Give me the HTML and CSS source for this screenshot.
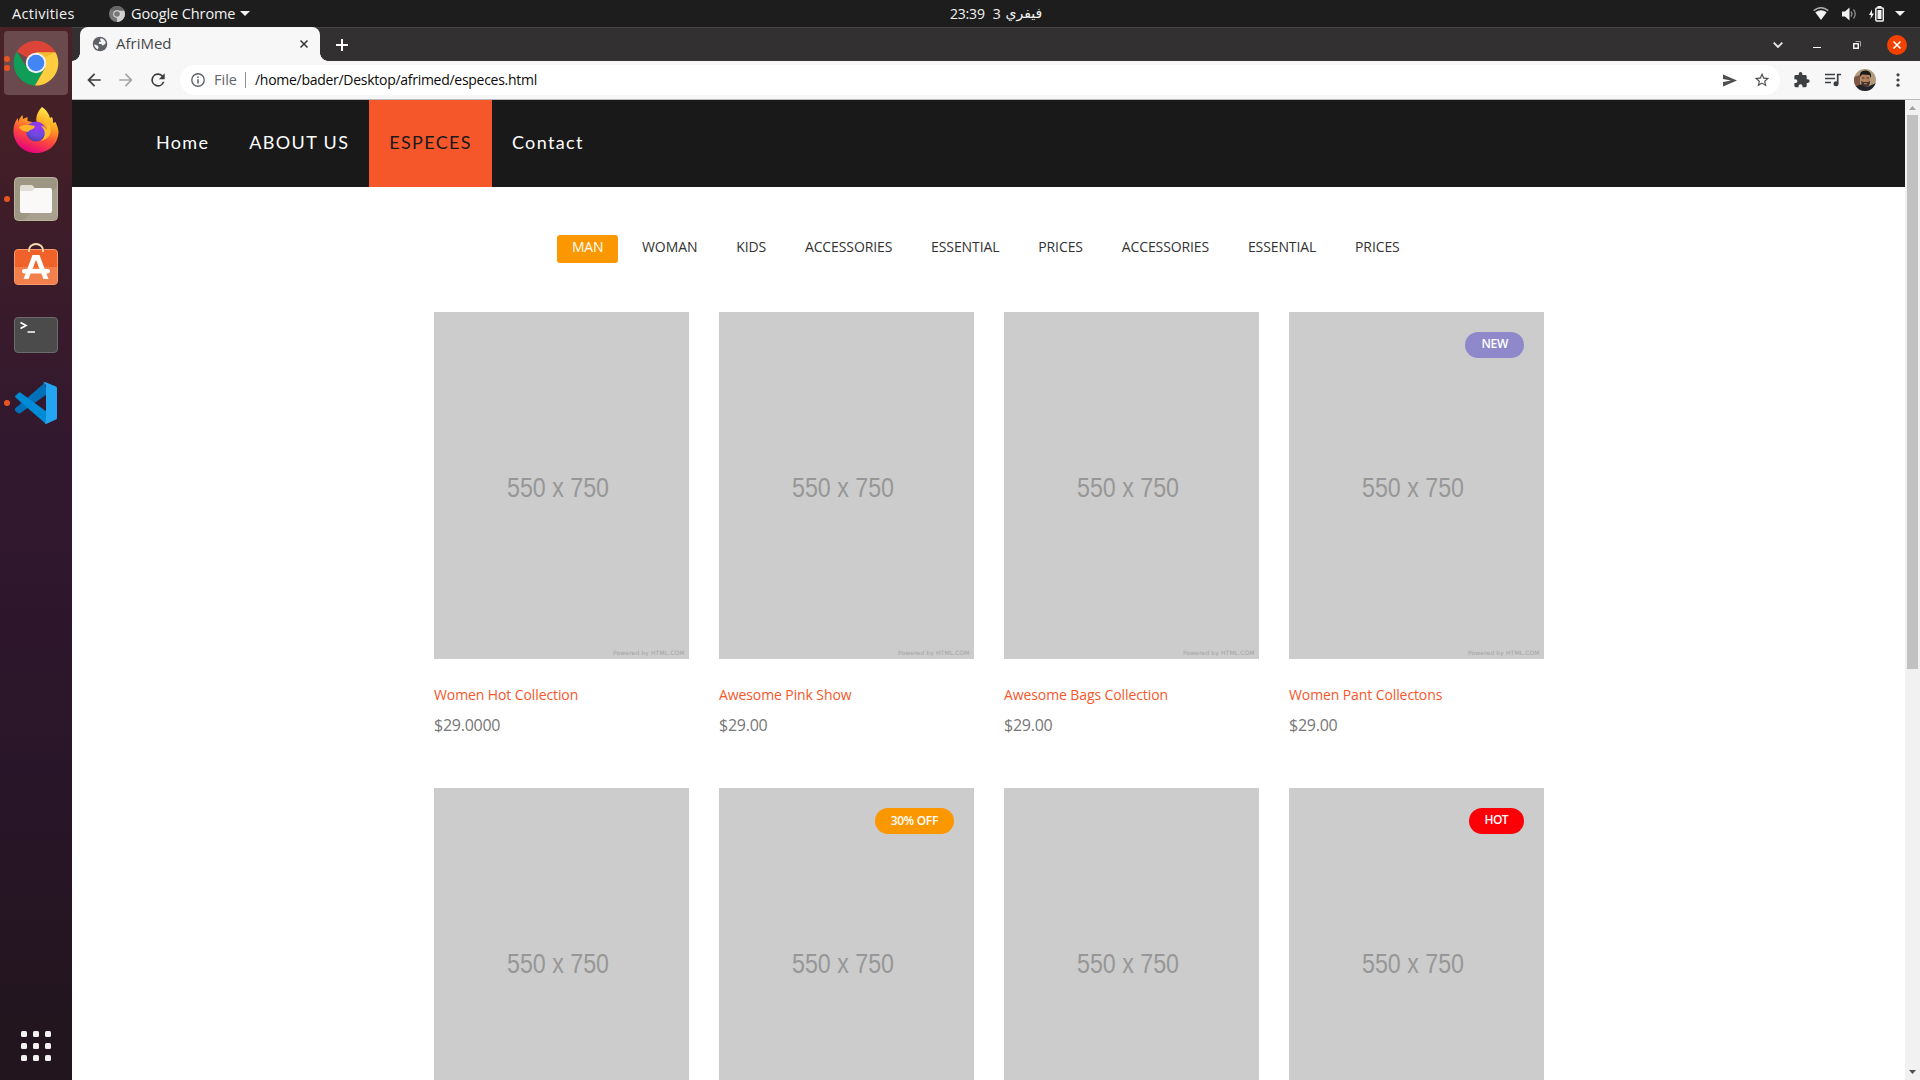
FILE: index.html
```html
<!DOCTYPE html>
<html lang="en">
<head>
<meta charset="utf-8">
<title>AfriMed</title>
<link rel="stylesheet" href="styles.css">
</head>
<body>
<svg class="defs" width="0" height="0" aria-hidden="true">
  <symbol id="placeholder" viewBox="0 0 255 347">
    <rect width="255" height="347" fill="#ccc"/>
    <text x="73" y="184.5" font-family="Liberation Sans, sans-serif" font-size="27.5" fill="#979797" textLength="102" lengthAdjust="spacingAndGlyphs">550 x 750</text>
    <text x="179" y="343" font-family="DejaVu Sans, sans-serif" font-size="6" fill="#a3a3a3" textLength="71.5">Powered by HTML.COM</text>
  </symbol>
</svg>

<header class="topbar">
  <span class="activities">Activities</span>
  <div class="app-menu">
    <svg width="16" height="16" viewBox="0 0 16 16"><circle cx="8" cy="8" r="8" fill="#777"/><path d="M8 8V16A8 8 0 0 0 15.2 4.6H8Z" fill="#d0d0d0"/><path d="M1.1 4A8 8 0 0 1 15.2 4.6H8Z" fill="#666"/><circle cx="8" cy="8" r="3.8" fill="#ddd"/><circle cx="8" cy="8" r="2.8" fill="#777"/></svg>
    <span class="app-name">Google Chrome</span>
    <svg width="10" height="5" viewBox="0 0 10 5"><path d="M0 0H10L5 5Z" fill="#f2f2f2"/></svg>
  </div>
  <div class="clock"><span>23:39</span><span class="day">3</span><span class="month" lang="ar">فيفري</span></div>
  <div class="tray">
    <svg width="16" height="14" viewBox="0 0 16 14"><path d="M.7 3.6Q8-2.2 15.300 3.600" fill="none" stroke="#aaa" stroke-width="1.500"/><path d="M2.300 5.300Q8 1.400 13.700 5.300L8 13Z" fill="#f2f2f2"/></svg>
    <svg class="volume" width="16" height="14" viewBox="0 0 16 14"><path d="M0 4.500H3L7.500.500V13.500L3 9.500H0Z" fill="#f2f2f2"/><path d="M9 4.500Q11 7 9 9.500M11.500 2.500Q15 7 11.500 11.500" fill="none" stroke="#8a8a8a" stroke-width="1.300"/></svg>
    <svg class="battery" width="15" height="16" viewBox="0 0 15 16"><path d="M3 3.500L0 9H2L1.500 13L5 7.500H3Z" fill="#f2f2f2"/><rect x="6.800" y="2" width="7.500" height="13" rx="1" fill="none" stroke="#f2f2f2" stroke-width="1.500"/><path d="M8.500 0H12.500V2H8.500ZM8.500 4H12.500V13H8.500Z" fill="#f2f2f2"/></svg>
    <svg width="10" height="5" viewBox="0 0 10 5"><path d="M0 0H10L5 5Z" fill="#f2f2f2"/></svg>
  </div>
</header>

<div class="desktop">
  <aside class="dock">
    <div class="slot active running twice">
      <svg width="46" height="46" viewBox="0 0 46 46"><path d="M23 23L3.800 11.500A22.500 22.500 0 0 1 42.700 12.500Z" fill="#db4437"/><path d="M3.800 11.500A22.500 22.500 0 0 0 22 45.500L32 28L23 23L13 26Z" fill="#0f9d58"/><path d="M22 45.500A22.500 22.500 0 0 0 42.700 12.500H23L32 28Z" fill="#ffcd40"/><path d="M23 12.500H42.700L32 17Z" fill="#f1b92e"/><circle cx="23" cy="23" r="10.200" fill="#f1f1f1"/><circle cx="23" cy="23" r="8.300" fill="#4285f4"/></svg>
    </div>
    <div class="slot firefox">
      <svg width="46" height="48" viewBox="0 0 46 48"><defs><linearGradient id="fox" x1=".75" y1="0" x2=".35" y2="1"><stop offset="0" stop-color="#fff44f"/><stop offset=".35" stop-color="#ffa51f"/><stop offset=".65" stop-color="#ff4a3e"/><stop offset="1" stop-color="#e4007f"/></linearGradient><radialGradient id="globe" cx=".6" cy=".25" r=".8"><stop offset="0" stop-color="#a033f0"/><stop offset=".6" stop-color="#6a4ae0"/><stop offset="1" stop-color="#5038a8"/></radialGradient></defs><path d="M29 1C35 5 36 9 37 12L39 11C40 13 40 15 40 17L42.500 16C44.500 20 45.500 24 45.500 26C45 39 35 47 23 47C10 47 .500 37 .500 25C.500 20 2.500 14 5 12V16C7 12 8 10 9.500 9L10 13L14.500 11V15C17 16 21 16 24 17C22 11 25 5 29 1Z" fill="url(#fox)"/><circle cx="23" cy="25.500" r="10" fill="url(#globe)"/><path d="M6 21C11 18 17 19 22 20C21 24 17 23 15 26C11 25 8 25 6 21Z" fill="#ffb329"/><path d="M22 14C28 12 35 17 34 24C32 22 31 20 28 20C33 24 33 31 28 35C36 33 40 27 37 19C34 14 29 12 22 14Z" fill="#ffbd2e"/></svg>
    </div>
    <div class="slot running">
      <svg width="44" height="44" viewBox="0 0 44 44"><rect x=".500" y=".500" width="43" height="43" rx="4" fill="#9d9683" stroke="#b8b29f"/><path d="M10 43L43 10V43Z" fill="#a8a18e"/><path d="M6 14V10Q6 8 8 8H17Q19 8 20 10L21 12H36V16H6Z" fill="#e2ded3"/><path d="M6 14H18L21 11H36Q38 11 38 13V34Q38 36 36 36H8Q6 36 6 34Z" fill="#faf9f8"/></svg>
    </div>
    <div class="slot store">
      <svg width="44" height="42" viewBox="0 0 44 42"><rect x=".500" y="6.500" width="43" height="35" rx="3.500" fill="#f0622a" stroke="#f79a6c"/><path d="M1 24H43V38Q43 41 40 41H4Q1 41 1 38Z" fill="#f37f4c"/><path d="M15 9V7A7 6 0 0 1 29 7V9" fill="none" stroke="#f6dcae" stroke-width="1.800"/><path d="M18.500 12H25.500L34.500 36H29.500L22 17L14.500 36H9.500Z" fill="#fff"/><rect x="8" y="26" width="28" height="4.500" rx="2.200" fill="#fff"/></svg>
    </div>
    <div class="slot">
      <svg width="44" height="36" viewBox="0 0 44 36"><rect x=".500" y=".500" width="43" height="35" rx="3.500" fill="#4b4b4b" stroke="#6b6b6b"/><path d="M6.500 5.500L12 8.500L6.500 11.500M13.500 15H21" fill="none" stroke="#fff" stroke-width="1.700"/></svg>
    </div>
    <div class="slot running">
      <svg width="42" height="42" viewBox="0 0 42 42"><path d="M0 26.500L30 .500L32 12L5 31.500Q3 32 0 28.500Z" fill="#0070b8"/><path d="M0 14L4 10.500Q5 10 6 11L32 30L31 42L1 16Q0 15 0 14Z" fill="#008bd6"/><path d="M30 0L41 4.500Q42 5 42 6V36Q42 37 41 37.500L31 42Q29 42 31 39V3Q30 1 28 1Z" fill="#24a5f2"/></svg>
    </div>
    <div class="apps"><i></i><i></i><i></i><i></i><i></i><i></i><i></i><i></i><i></i></div>
  </aside>

  <main class="window">
    <div class="tabstrip">
      <div class="tab">
        <svg width="16" height="16" viewBox="1 1 22 22"><path d="M12 2a10 10 0 1 0 0 20 10 10 0 0 0 0-20Z" fill="#5f6368"/><path d="M4 12.500L9 14.500L10 16.500L9 19.400C6 18.200 4 15.500 4 12.500ZM13 4.100C16.500 4.500 19.300 7.200 19.900 10.500L17.500 13.500L15 14L14 12L10 11.500L11 9L14 8.500L12 6.500Z" fill="#f7f7f7"/></svg>
        <span class="tab-title">AfriMed</span>
        <svg class="tab-close" width="8" height="8" viewBox="0 0 8 8"><path d="M.500.500L7.500 7.500M7.500.500L.500 7.500" stroke="#333" stroke-width="1.500"/></svg>
      </div>
      <svg class="new-tab" width="12" height="12" viewBox="0 0 12 12"><path d="M6 0V12M0 6H12" stroke="#fff" stroke-width="2"/></svg>
      <div class="window-buttons">
        <svg width="10" height="6" viewBox="0 0 10 6"><path d="M.700.700L5 5L9.300.700" fill="none" stroke="#e6e6e6" stroke-width="1.900"/></svg>
        <svg class="minimize" width="8" height="6" viewBox="0 0 8 6"><path d="M0 5.500H8" stroke="#fff"/></svg>
        <svg class="restore" width="8" height="8" viewBox="0 0 8 8"><path d="M2.500.500H7.500V5.500" fill="none" stroke="#a5a5a5"/><rect x=".750" y="2.750" width="4.500" height="4.500" fill="none" stroke="#fff" stroke-width="1.400"/></svg>
        <svg class="close" width="20" height="20" viewBox="0 0 20 20"><circle cx="10" cy="10" r="10" fill="#f24100"/><path d="M6.500 6.500L13.500 13.500M13.500 6.500L6.500 13.500" stroke="#fff" stroke-width="1.600"/></svg>
      </div>
    </div>

    <div class="toolbar">
      <svg class="icon" viewBox="0 0 24 24"><path d="M20 11H7.830l5.590-5.590L12 4l-8 8 8 8 1.410-1.410L7.830 13H20z" fill="#3c3c3c"/></svg>
      <svg class="icon" viewBox="0 0 24 24"><path d="M12 4l-1.410 1.410L16.170 11H4v2h12.170l-5.580 5.590L12 20l8-8z" fill="#a6a6a6"/></svg>
      <svg class="icon" viewBox="0 0 24 24"><path d="M17.650 6.350A8 8 0 1 0 19.730 14h-2.080A6 6 0 1 1 12 6c1.660 0 3.140.690 4.220 1.780L13 11h7V4z" fill="#3c3c3c"/></svg>
      <div class="omnibox">
        <svg width="16" height="16" viewBox="0 0 16 16"><circle cx="8" cy="8" r="6.200" fill="none" stroke="#5f6368" stroke-width="1.400"/><path d="M7.200 4.500H8.800V6H7.200ZM7.200 7.200H8.800V11.500H7.200Z" fill="#5f6368"/></svg>
        <span class="scheme">File</span>
        <span class="url">/home/bader/Desktop/afrimed/especes.html</span>
        <svg class="send" width="14" height="13" viewBox="0 0 14 13"><path d="M0 .500L14 6.500L0 12.500V8L8 6.500L0 5Z" fill="#4d4f52"/></svg>
        <svg width="16" height="16" viewBox="1 1 22 22"><path d="M22 9.240l-7.190-.620L12 2 9.190 8.630 2 9.240l5.460 4.730L5.820 21 12 17.270 18.180 21l-1.630-7.030L22 9.240zM12 15.400l-3.760 2.270 1-4.280-3.320-2.880 4.380-.380L12 6.100l1.710 4.040 4.380.380-3.320 2.880 1 4.280L12 15.400z" fill="#4d4f52"/></svg>
      </div>
      <div class="toolbar-actions">
        <svg width="16" height="16" viewBox="1.500 1 22 22"><path d="M20.500 11H19V7c0-1.100-.900-2-2-2h-4V3.500a2.500 2.500 0 0 0-5 0V5H4c-1.100 0-1.990.900-1.990 2v3.800H3.500c1.490 0 2.700 1.210 2.700 2.700s-1.210 2.700-2.700 2.700H2V20c0 1.100.900 2 2 2h3.800v-1.500c0-1.490 1.210-2.700 2.700-2.700s2.700 1.210 2.700 2.700V22H17c1.100 0 2-.900 2-2v-4h1.500a2.500 2.500 0 0 0 0-5z" fill="#3c4043"/></svg>
        <svg width="16" height="14" viewBox="0 0 16 14"><path d="M0 1.500H10M0 5.500H10M0 9.500H6" stroke="#3c4043" stroke-width="1.600"/><path d="M12.700 1.500H16M12.700.800V10.500" fill="none" stroke="#3c4043" stroke-width="1.700"/><circle cx="11" cy="10.700" r="2.500" fill="#3c4043"/></svg>
        <svg width="22" height="22" viewBox="0 0 22 22"><defs><clipPath id="round"><circle cx="11" cy="11" r="11"/></clipPath></defs><g clip-path="url(#round)"><path d="M0 0H22V22H0Z" fill="#b39c7b"/><path d="M0 8L6 6V18H0Z" fill="#7d5546"/><path d="M0 22V18L8 15L13 18L22 14V22Z" fill="#23242b"/><ellipse cx="11.500" cy="10.500" rx="5" ry="6.500" fill="#b5835f"/><path d="M6 8Q5 1 12 1.500Q18 2 17 9L15.500 6L8 5.500Z" fill="#1d1a1b"/><path d="M8 9H10.500M12.500 9H15" stroke="#46302a"/><path d="M7 12L9.500 13H13.500L16 12Q16 18 11.500 18Q7.500 17.500 7 12Z" fill="#493229"/><path d="M10 14.700H13" stroke="#b98a75"/></g></svg>
        <svg class="menu-dots" width="4" height="14" viewBox="0 0 4 14"><g fill="#3c4043"><circle cx="2" cy="1.800" r="1.600"/><circle cx="2" cy="7" r="1.600"/><circle cx="2" cy="12.200" r="1.600"/></g></svg>
      </div>
    </div>

    <div class="viewport">
      <div class="page">
        <nav class="nav">
          <a>Home</a><a>ABOUT US</a><a class="current">ESPECES</a><a>Contact</a>
        </nav>
        <ul class="filter">
          <li class="selected">MAN</li><li>WOMAN</li><li>KIDS</li><li>ACCESSORIES</li><li>ESSENTIAL</li><li>PRICES</li><li>ACCESSORIES</li><li>ESSENTIAL</li><li>PRICES</li>
        </ul>
        <section class="products">
          <article><div class="thumb"><svg><use href="#placeholder"/></svg></div><h3>Women Hot Collection</h3><p>$29.0000</p></article>
          <article><div class="thumb"><svg><use href="#placeholder"/></svg></div><h3>Awesome Pink Show</h3><p>$29.00</p></article>
          <article><div class="thumb"><svg><use href="#placeholder"/></svg></div><h3>Awesome Bags Collection</h3><p>$29.00</p></article>
          <article><div class="thumb"><svg><use href="#placeholder"/></svg><span class="badge new">NEW</span></div><h3>Women Pant Collectons</h3><p>$29.00</p></article>
          <article><div class="thumb"><svg><use href="#placeholder"/></svg></div></article>
          <article><div class="thumb"><svg><use href="#placeholder"/></svg><span class="badge off">30% OFF</span></div></article>
          <article><div class="thumb"><svg><use href="#placeholder"/></svg></div></article>
          <article><div class="thumb"><svg><use href="#placeholder"/></svg><span class="badge hot">HOT</span></div></article>
        </section>
      </div>
      <div class="scrollbar">
        <svg width="7" height="4" viewBox="0 0 7 4"><path d="M3.500 0L7 4H0Z" fill="#a3a3a3"/></svg>
        <div class="thumb-bar"></div>
        <svg width="7" height="4" viewBox="0 0 7 4"><path d="M0 0H7L3.500 4Z" fill="#505050"/></svg>
      </div>
    </div>
  </main>
</div>
</body>
</html>
```

FILE: styles.css
```css
* { box-sizing: border-box; }

body {
  margin: 0;
  width: 1920px;
  height: 1080px;
  overflow: hidden;
  display: flex;
  flex-direction: column;
  background: #fff;
  font-family: "Open Sans", "Noto Sans", sans-serif;
}

svg { display: block; flex: none; }
.defs { position: absolute; }

/* System bar */
.topbar {
  height: 27px;
  flex: none;
  display: grid;
  grid-template-columns: 109px 841px 1fr auto;
  align-items: center;
  background: #1d1d1d;
  color: #f2f2f2;
  font-size: 14px;
  line-height: 27px;
}
.activities { padding-left: 12px; font-size: 14.5px; letter-spacing: 0.3px; }
.app-menu { display: flex; align-items: center; }
.app-name { width: 115px; padding-left: 6px; font-size: 14.5px; letter-spacing: -0.1px; white-space: nowrap; }
.clock { display: flex; letter-spacing: -0.2px; }
.day { margin-left: 8px; }
.month { margin-left: 5px; font-family: "DejaVu Sans", sans-serif; letter-spacing: 0; }
.tray { display: flex; align-items: center; padding-right: 15px; }
.volume { margin-left: 13px; }
.battery { margin: 0 11px 0 11px; }

.desktop { flex: 1; display: flex; min-height: 0; }

/* Dock */
.dock {
  width: 72px;
  flex: none;
  display: flex;
  flex-direction: column;
  align-items: center;
  gap: 4px;
  padding: 4px 0 19px;
  background: linear-gradient(#4a2126, #3b1c29 22%, #32182f 40%, #281528 75%, #22151d 96%);
}
.slot {
  position: relative;
  width: 64px;
  height: 64px;
  flex: none;
  display: grid;
  place-items: center;
  border-radius: 4px;
}
.active { background: #6a4a4d; }
.firefox svg { margin-top: -2px; }
.store svg { margin-top: -6px; }
.running::before {
  content: "";
  position: absolute;
  left: 0;
  top: 29px;
  width: 6px;
  height: 6px;
  border-radius: 50%;
  background: #e95420;
}
.twice::before { top: 24.5px; box-shadow: 0 9px #e95420; }
.apps {
  margin-top: auto;
  display: grid;
  grid-template-columns: repeat(3, 6px);
  gap: 6px;
}
.apps i { height: 6px; border-radius: 1.5px; background: #f2f1f0; }

/* Browser chrome */
.window { flex: 1; min-width: 0; display: flex; flex-direction: column; }
.tabstrip {
  height: 34px;
  flex: none;
  display: flex;
  align-items: center;
  padding-left: 8px;
  background: #323031;
  border-top: 1px solid #484647;
}
.tab {
  position: relative;
  width: 240px;
  height: 34px;
  margin-top: -1px;
  display: flex;
  align-items: center;
  padding: 0 12px;
  border-radius: 8px 8px 0 0;
  background: #f7f7f7;
}
.tab::before, .tab::after {
  content: "";
  position: absolute;
  bottom: 0;
  width: 8px;
  height: 8px;
}
.tab::before { left: -8px; background: radial-gradient(circle at 0 0, #323031 7.5px, #f7f7f7 8px); }
.tab::after { right: -8px; background: radial-gradient(circle at 100% 0, #323031 7.5px, #f7f7f7 8px); }
.tab-title { margin-left: 8px; padding-bottom: 2px; color: #45474a; font-size: 15px; line-height: 32px; }
.tab-close { margin-left: auto; }
.new-tab { margin-left: 16px; }
.window-buttons { margin-left: auto; display: flex; align-items: center; padding-right: 13px; }
.minimize { margin-left: 30px; }
.restore { margin-left: 32px; }
.close { margin-left: 26px; }

.toolbar {
  height: 39px;
  flex: none;
  display: flex;
  align-items: center;
  padding: 0 20px 0 12px;
  background: #f7f7f7;
  border-bottom: 1px solid #b9bbbc;
}
.icon { width: 20px; height: 20px; margin-right: 12px; }
.omnibox {
  width: 1600px;
  height: 30px;
  display: flex;
  align-items: center;
  padding: 0 10px;
  border-radius: 15px;
  background: #fff;
}
.scheme { width: 39px; padding-left: 8px; color: #5f6368; font-size: 14.5px; line-height: 16px; }
.url {
  padding-left: 9px;
  border-left: 1px solid #8b8d90;
  color: #0a0a0a;
  font-size: 14px;
  line-height: 16px;
  letter-spacing: -0.28px;
}
.send { margin: 0 17px 0 auto; }
.toolbar-actions { flex: 1; display: flex; align-items: center; gap: 15px; padding-left: 14px; }
.toolbar-actions svg + svg + svg { margin-left: -2px; }
.toolbar-actions .menu-dots { margin-left: auto !important; }

/* Page */
.viewport { flex: 1; min-height: 0; display: flex; }
.page { flex: 1; min-width: 0; overflow: hidden; background: #fff; }
.nav {
  height: 87px;
  display: flex;
  padding-left: 64px;
  background: #191919;
  font-family: "Lato", "Open Sans", sans-serif;
  font-size: 18px;
  line-height: 84px;
  letter-spacing: 1.34px;
  color: #fff;
}
.nav a { padding: 0 20px; }
.nav .current { background: #f6572a; color: #191919; }

.filter {
  display: flex;
  gap: 8.8px;
  margin: 48px 0 49px;
  padding: 0 0 0 485px;
  list-style: none;
  color: #333;
  font-size: 14px;
  line-height: 24px;
  letter-spacing: -0.1px;
}
.filter li { height: 28px; padding: 0 15px; }
.filter .selected { border-radius: 3px; background: #fb9700; color: #fff; letter-spacing: -0.25px; }

.products {
  display: grid;
  grid-template-columns: repeat(4, 255px);
  grid-auto-rows: 446px;
  gap: 30px;
  margin-left: 362px;
}
.thumb { position: relative; height: 347px; }
.thumb svg { width: 255px; height: 347px; }
.badge {
  position: absolute;
  top: 20px;
  right: 20px;
  height: 26px;
  padding: 0 16px;
  border-radius: 13px;
  color: #fff;
  font-size: 12px;
  font-weight: 600;
  line-height: 23px;
  letter-spacing: -0.3px;
}
.new { background: #8f89cc; }
.off { background: #fb9700; line-height: 25px; }
.hot { background: #fb0007; letter-spacing: -0.6px; }
.products h3 {
  margin: 26px 0 0;
  color: #f6572a;
  font-size: 14px;
  font-weight: 500;
  line-height: 20px;
  letter-spacing: -0.1px;
}
.products p {
  margin: 8px 0 0;
  color: #777;
  font-size: 16px;
  line-height: 24px;
  letter-spacing: -0.25px;
}

.scrollbar {
  width: 15px;
  flex: none;
  display: flex;
  flex-direction: column;
  align-items: center;
  padding: 6px 0;
  background: #f1f1f1;
}
.thumb-bar { width: 11px; height: 554px; margin: 5px 0 auto; background: #c1c1c1; }
```
